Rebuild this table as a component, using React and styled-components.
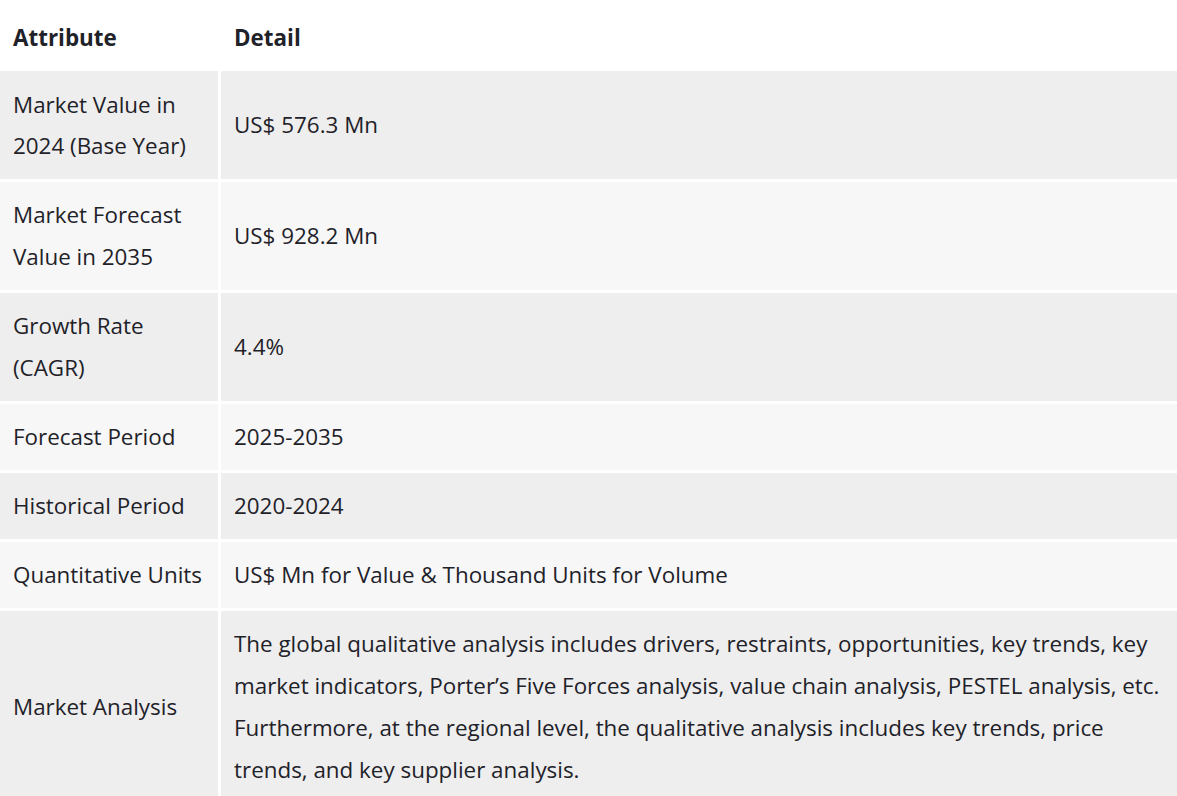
import React from 'react';
import styled, { createGlobalStyle } from 'styled-components';

const GlobalStyle = createGlobalStyle`
    body {
        margin: 0;
        background: #ffffff;
        font-family: "Open Sans", "Noto Sans", sans-serif;
        color: #1f2229;
    }
`;

const Table = styled.div`
    display: grid;
    row-gap: 2.5px;
    width: 100%;
`;

const Row = styled.div`
    display: grid;
    grid-template-columns: 218px 1fr;
    column-gap: 3px;
    min-height: ${props => (props.$head ? '68.5px' : 'auto')};
`;

const Cell = styled.div`
    display: flex;
    align-items: center;
    padding: ${props => (props.$head ? '17px 8px 9px 13px' : '12.6px 8px 12.2px 13px')};
    font-size: 22.4px;
    line-height: 41.8px;
    font-weight: ${props => (props.$head ? 700 : 400)};
    background: ${props => props.$bg};
`;

const rows = [
    ['Market Value in 2024 (Base Year)', 'US$ 576.3 Mn'],
    ['Market Forecast Value in 2035', 'US$ 928.2 Mn'],
    ['Growth Rate (CAGR)', '4.4%'],
    ['Forecast Period', '2025-2035'],
    ['Historical Period', '2020-2024'],
    ['Quantitative Units', 'US$ Mn for Value & Thousand Units for Volume'],
    ['Market Analysis', 'The global qualitative analysis includes drivers, restraints, opportunities, key trends, key market indicators, Porter’s Five Forces analysis, value chain analysis, PESTEL analysis, etc. Furthermore, at the regional level, the qualitative analysis includes key trends, price trends, and key supplier analysis.'],
];

function App() {
    return (
        <>
            <GlobalStyle />
            <Table>
                <Row $head>
                    <Cell $head $bg="#ffffff">Attribute</Cell>
                    <Cell $head $bg="#ffffff">Detail</Cell>
                </Row>
                {rows.map(([attr, detail], i) => {
                    const bg = i % 2 === 0 ? '#eeeeee' : '#f7f7f7';
                    return (
                        <Row key={attr}>
                            <Cell $bg={bg}>{attr}</Cell>
                            <Cell $bg={bg}>{detail}</Cell>
                        </Row>
                    );
                })}
            </Table>
        </>
    );
}

export default App;
